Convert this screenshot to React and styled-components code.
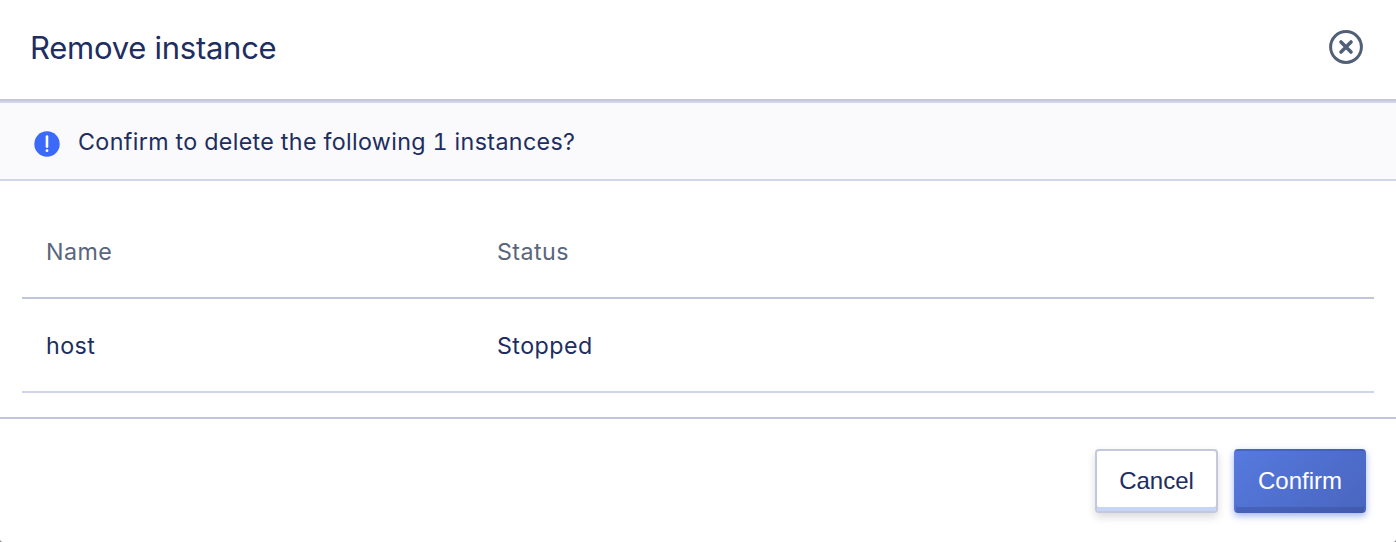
import React from "react";
import styled, { createGlobalStyle } from "styled-components";

const GlobalStyle = createGlobalStyle`
  *, *::before, *::after { box-sizing: border-box; }
  body { margin: 0; background: #77797d; }
`;

const Dialog = styled.div`
  display: flex;
  flex-direction: column;
  width: 1396px;
  height: 542px;
  overflow: hidden;
  border-radius: 0 0 3px 3px;
  background: #fff;
  color: #202d60;
  font-family: Inter, "Liberation Sans", sans-serif;
  font-size: 23.25px;
`;

const Header = styled.header`
  display: flex;
  align-items: center;
  justify-content: space-between;
  height: 101px;
  padding: 0 32px 6px 30px;
  border-bottom: 2px solid #c3c8d9;
`;

const Title = styled.h1`
  margin: 0;
  padding-top: 2px;
  font-size: 31px;
  line-height: 48px;
  font-weight: 400;
  letter-spacing: -0.26px;
`;

const CloseButton = styled.button`
  display: flex;
  padding: 0;
  border: 0;
  background: none;
  color: #526077;
`;

const Alert = styled.div`
  display: flex;
  align-items: center;
  height: 80px;
  padding: 0 33px;
  gap: 17px;
  border-top: 2px solid #d3d6ea;
  border-bottom: 2px solid #d3d6ea;
  background: #fafafc;
`;

const AlertIcon = styled.svg`
  flex: none;
  margin-top: 5px;
`;

const AlertText = styled.p`
  margin: 0;
  padding-top: 2px;
  line-height: 36px;
  letter-spacing: 0.36px;
  font-variant-numeric: tabular-nums;
`;

const Body = styled.main`
  height: 236px;
  padding: 24px 22px 0;
`;

const Row = styled.div`
  display: grid;
  grid-template-columns: 451px 1fr;
  align-items: center;
  height: 94px;
  padding: 2px 24px 0;
  border-bottom: 2px solid ${(p) => (p.$head ? "#c3c6da" : "#d0d4e8")};
  color: ${(p) => (p.$head ? "#5a667b" : "#202d60")};
  line-height: 30px;
  letter-spacing: 0.45px;
`;

const Footer = styled.footer`
  display: flex;
  justify-content: flex-end;
  gap: 16px;
  padding: 30px 30px 0;
  border-top: 2px solid #c3c6da;
`;

const Button = styled.button`
  width: ${(p) => (p.$primary ? 132 : 123)}px;
  height: 64px;
  padding: 0;
  border: 2px solid;
  border-color: ${(p) => (p.$primary ? "rgba(54, 76, 145, 0.4) transparent" : "#c3c9db")};
  border-radius: 4px;
  background: ${(p) => (p.$primary ? "linear-gradient(135deg, #567ade, #4965bf) border-box" : "#fff")};
  box-shadow: ${(p) =>
    p.$primary
      ? "inset 0 -4px rgba(54, 76, 145, 0.4), 0 3px 7px rgba(70, 105, 225, 0.5)"
      : "inset 0 -4px #c6d5f7, 0 4px 8px rgba(0, 0, 0, 0.15)"};
  color: ${(p) => (p.$primary ? "#fff" : "#202d60")};
  font: 400 24px/56px "Liberation Sans", Arial, sans-serif;
`;

export default function App() {
  return (
    <>
      <GlobalStyle />
      <Dialog role="dialog">
        <Header>
          <Title>Remove instance</Title>
          <CloseButton aria-label="Close">
            <svg width="36" height="36" viewBox="0 0 36 36" fill="none" stroke="currentColor">
              <circle cx="18" cy="18" r="15.4" strokeWidth="3" />
              <path d="M13 13 23 23M23 13 13 23" strokeWidth="3.6" strokeLinecap="round" />
            </svg>
          </CloseButton>
        </Header>
        <Alert>
          <AlertIcon width="28" height="28" viewBox="0 0 28 28">
            <circle cx="14" cy="14" r="12.7" fill="#3b69fa" />
            <path d="M14 6.5V16.6" stroke="#fff" strokeWidth="2.6" strokeLinecap="round" />
            <circle cx="14" cy="20.7" r="1.4" fill="#fff" />
          </AlertIcon>
          <AlertText>Confirm to delete the following 1 instances?</AlertText>
        </Alert>
        <Body>
          <Row $head>
            <span>Name</span>
            <span>Status</span>
          </Row>
          <Row>
            <span>host</span>
            <span>Stopped</span>
          </Row>
        </Body>
        <Footer>
          <Button>Cancel</Button>
          <Button $primary>Confirm</Button>
        </Footer>
      </Dialog>
    </>
  );
}
